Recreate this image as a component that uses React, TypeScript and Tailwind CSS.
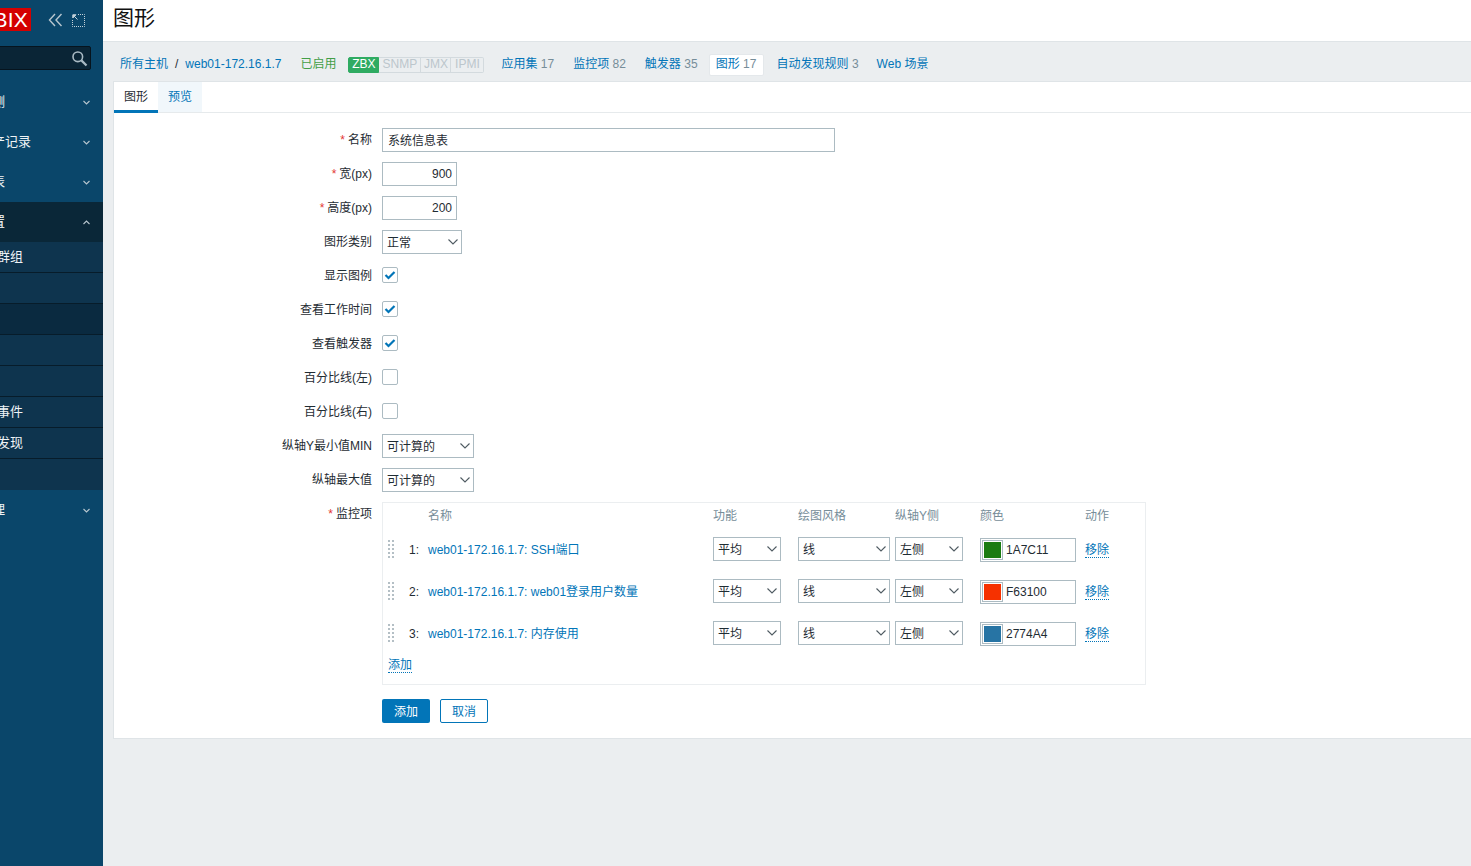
import React from "react";

const Chev = ({ up = false }: { up?: boolean }) => (
  <svg width="7" height="5" viewBox="0 0 7 5" fill="none" stroke="#b7c6cf" strokeWidth="1.1">
    <polyline points={up ? "0.5,4 3.5,1 6.5,4" : "0.5,1 3.5,4 6.5,1"} />
  </svg>
);

const Select = ({ label, w }: { label: string; w: string }) => (
  <div className={`${w} h-6 border border-[#acbbc2] bg-white flex items-center justify-between pl-1 pr-[3px] text-[#1f2c33]`}>
    <span className="pt-[2px]">{label}</span>
    <svg width="10" height="6" viewBox="0 0 10 6" fill="none" stroke="#4f5b62" strokeWidth="1.1">
      <polyline points="0.5,0.5 5,5 9.5,0.5" />
    </svg>
  </div>
);

const Check = ({ on = false }: { on?: boolean }) => (
  <div className="w-4 h-4 -mt-[2px] border border-[#acbbc2] rounded-[2px] bg-white flex items-center justify-center">
    {on && (
      <svg width="12" height="10" viewBox="0 0 12 10" fill="none" stroke="#0275b8" strokeWidth="2.2">
        <polyline points="1.5,5 4.5,8 10.5,2" />
      </svg>
    )}
  </div>
);

const Row = ({ label, req = false, children }: { label: string; req?: boolean; children: React.ReactNode }) => (
  <div className="flex items-center h-6 mb-[10px]">
    <div className="w-[258px] text-right text-[#1f2c33]">
      {req && <span className="text-[#e33734] mr-[3px]">*</span>}
      {label}
    </div>
    <div className="ml-[10px] flex items-center">{children}</div>
  </div>
);

const Drag = () => (
  <svg width="6" height="18" viewBox="0 0 6 18" fill="#b4bfc5">
    {[0, 4, 8, 12, 16].map((y) => (
      <g key={y}>
        <rect x="0" y={y} width="2" height="2" />
        <rect x="4" y={y} width="2" height="2" />
      </g>
    ))}
  </svg>
);

const Top = ({ text, up = false, cls = "" }: { text: string; up?: boolean; cls?: string }) => (
  <div className={`h-10 flex items-center justify-between pl-[76px] pr-[13px] text-[13px] text-[#eef3f6] ${cls}`}>
    <span>{text}</span>
    <Chev up={up} />
  </div>
);

const subs = ["主机群组", "模板", "主机", "维护", "动作", "关联事件", "自动发现", "服务"];

const items = [
  { i: "1:", name: "web01-172.16.1.7: SSH端口", color: "bg-[#1a7c11]", hex: "1A7C11" },
  { i: "2:", name: "web01-172.16.1.7: web01登录用户数量", color: "bg-[#f63100]", hex: "F63100" },
  { i: "3:", name: "web01-172.16.1.7: 内存使用", color: "bg-[#2774a4]", hex: "2774A4" },
];

const grid = "grid grid-cols-[45px_285px_85px_97px_85px_105px_60px] items-center";

export default function App() {
  return (
    <div className="flex w-full h-screen overflow-hidden bg-[#ebeef0] text-xs font-['Liberation_Sans','Noto_Sans_CJK_SC',sans-serif]">
      <aside className="w-[103px] shrink-0 bg-[#0a466a] overflow-hidden">
        <div className="w-[200px] -ml-[97px]">
          <div className="h-[46px] flex items-start pt-2">
            <div className="ml-[37px] w-[91px] h-[23px] bg-[#d40000] text-white text-[21px] leading-[23px] text-right pr-[3px] tracking-[0.2px]">
              ZABBIX
            </div>
            <svg className="ml-[17px] mt-[5px]" width="15" height="14" viewBox="0 0 15 14" fill="none" stroke="#b7c6cf" strokeWidth="1.4">
              <polyline points="7,1 1.5,7 7,13" />
              <polyline points="13.5,1 8,7 13.5,13" />
            </svg>
            <svg className="ml-[9px] mt-[6px]" width="13" height="13" viewBox="0 0 13 13" fill="none" stroke="#c6d3da">
              <path d="M6 .5h6.5v12H.5V6" strokeDasharray="1 1" />
              <path d="M1 1l4.5 4.5M.8 .8h3.2L.8 4z" fill="#c6d3da" />
            </svg>
          </div>
          <div className="ml-[40px] mr-[12px] h-6 bg-[#0a2536] border border-[#06141e] rounded-[2px] flex items-center justify-end pr-[2px]">
            <svg width="17" height="17" viewBox="0 0 17 17" fill="none" stroke="#a9bac4" strokeWidth="1.6">
              <circle cx="6.8" cy="6.8" r="4.8" />
              <line x1="10.4" y1="10.4" x2="15.5" y2="15.5" strokeWidth="2.2" />
            </svg>
          </div>
          <div className="h-3" />
          <Top text="监测" />
          <Top text="资产记录" />
          <Top text="报表" />
          <Top text="配置" up cls="bg-[#0a2738] text-white" />
          <div className="bg-[#0e344e] text-[#eef3f6]">
            {subs.map((s, i) => (
              <div
                key={s}
                className={`h-[31px] pl-[68px] flex items-center text-[13px] ${i < subs.length - 1 ? "border-b border-[#071c2a]" : ""} ${i === 2 ? "bg-[#0a2a40]" : ""}`}
              >
                {s}
              </div>
            ))}
          </div>
          <Top text="管理" />
        </div>
      </aside>

      <main className="flex-1 min-w-0">
        <header className="h-[42px] bg-white border-b border-[#dfe4e7] pl-[10px] flex items-center">
          <h1 className="text-[21px] text-[#111] font-normal -mt-[5px]">图形</h1>
        </header>

        <nav className="h-[39px] flex items-center pt-1 pl-[17px] text-[#0275b8]">
          <span>所有主机</span>
          <span className="mx-[7px] text-[#1f2c33]">/</span>
          <span>web01-172.16.1.7</span>
          <span className="ml-[19px] text-[#429e47]">已启用</span>
          <div className="ml-3 mt-[2px] flex h-4 leading-[12px] text-[#bcc6cc]">
            <span className="w-[31px] text-center bg-[#2fab62] text-white border border-[#2fab62] rounded-l-[2px]">ZBX</span>
            <span className="w-[42px] text-center border border-l-0 border-[#d3dade]">SNMP</span>
            <span className="w-[30px] text-center border border-l-0 border-[#d3dade]">JMX</span>
            <span className="w-[33px] text-center border border-l-0 border-[#d3dade] rounded-r-[2px]">IPMI</span>
          </div>
          <span className="ml-[17px]">
            应用集 <span className="text-[#768d99]">17</span>
          </span>
          <span className="ml-[19px]">
            监控项 <span className="text-[#768d99]">82</span>
          </span>
          <span className="ml-[19px]">
            触发器 <span className="text-[#768d99]">35</span>
          </span>
          <span className="ml-[11px] mt-[2px] h-[22px] w-[55px] pb-[2px] bg-white border border-[#e4e8eb] rounded-[2px] flex items-center justify-center">
            <span>
              图形 <span className="text-[#768d99]">17</span>
            </span>
          </span>
          <span className="ml-[13px]">
            自动发现规则 <span className="text-[#768d99]">3</span>
          </span>
          <span className="ml-[18px]">Web 场景</span>
        </nav>

        <section className="ml-[10px] h-[658px] bg-white border border-r-0 border-[#dfe4e7]">
          <div className="h-[31px] flex border-b border-[#e6eaec]">
            <div className="w-11 h-[31px] border-b-[3px] border-[#0275b8] text-center leading-[30px] text-[#1f2c33]">图形</div>
            <div className="w-11 h-[30px] bg-[#f1f7fb] text-center leading-[30px] text-[#0275b8]">预览</div>
          </div>

          <div className="pt-[15px]">
            <Row label="名称" req>
              <div className="w-[453px] h-6 border border-[#acbbc2] pl-[5px] pt-[2px] flex items-center text-[#1f2c33]">系统信息表</div>
            </Row>
            <Row label="宽(px)" req>
              <div className="w-[75px] h-6 border border-[#acbbc2] pr-1 flex items-center justify-end text-[#1f2c33]">900</div>
            </Row>
            <Row label="高度(px)" req>
              <div className="w-[75px] h-6 border border-[#acbbc2] pr-1 flex items-center justify-end text-[#1f2c33]">200</div>
            </Row>
            <Row label="图形类别">
              <Select label="正常" w="w-20" />
            </Row>
            <Row label="显示图例"><Check on /></Row>
            <Row label="查看工作时间"><Check on /></Row>
            <Row label="查看触发器"><Check on /></Row>
            <Row label="百分比线(左)"><Check /></Row>
            <Row label="百分比线(右)"><Check /></Row>
            <Row label="纵轴Y最小值MIN">
              <Select label="可计算的" w="w-[92px]" />
            </Row>
            <Row label="纵轴最大值">
              <Select label="可计算的" w="w-[92px]" />
            </Row>

            <div className="flex items-start">
              <div className="w-[258px] text-right text-[#1f2c33] pt-1">
                <span className="text-[#e33734] mr-[3px]">*</span>监控项
              </div>
              <div className="ml-[10px] w-[764px] h-[183px] border border-[#ebeef0]">
                <div className={`${grid} h-[25px] pt-[1px] text-[#768d99]`}>
                  <span />
                  <span>名称</span>
                  <span>功能</span>
                  <span>绘图风格</span>
                  <span>纵轴Y侧</span>
                  <span>颜色</span>
                  <span>动作</span>
                </div>
                {items.map((it) => (
                  <div key={it.i} className={`${grid} h-[42px]`}>
                    <div className="flex items-center justify-between pl-[5px] pr-[9px] text-[#1f2c33]">
                      <Drag />
                      <span className="pt-[2px]">{it.i}</span>
                    </div>
                    <span className="text-[#0275b8] pt-[2px]">{it.name}</span>
                    <Select label="平均" w="w-[68px]" />
                    <Select label="线" w="w-[92px]" />
                    <Select label="左侧" w="w-[68px]" />
                    <div className="w-24 h-6 mt-[2px] border border-[#acbbc2] flex items-center pl-[1px] text-[#1f2c33]">
                      <div className="w-[21px] h-5 border border-[#acbbc2] p-[1px] mr-[3px]">
                        <div className={`w-full h-full ${it.color}`} />
                      </div>
                      {it.hex}
                    </div>
                    <span className="mt-[2px] text-[#0275b8] justify-self-start border-b border-dotted border-[#0275b8] leading-[14px]">移除</span>
                  </div>
                ))}
                <div className="pl-[5px] pt-[3px]">
                  <span className="text-[#0275b8] border-b border-dotted border-[#0275b8]">添加</span>
                </div>
              </div>
            </div>

            <div className="mt-[14px] ml-[268px] flex gap-[10px]">
              <div className="w-12 h-6 pt-[2px] bg-[#0275b8] rounded-[2px] text-white flex items-center justify-center">添加</div>
              <div className="w-12 h-6 pt-[2px] bg-white border border-[#0275b8] rounded-[2px] text-[#0275b8] flex items-center justify-center">取消</div>
            </div>
          </div>
        </section>
      </main>
    </div>
  );
}
